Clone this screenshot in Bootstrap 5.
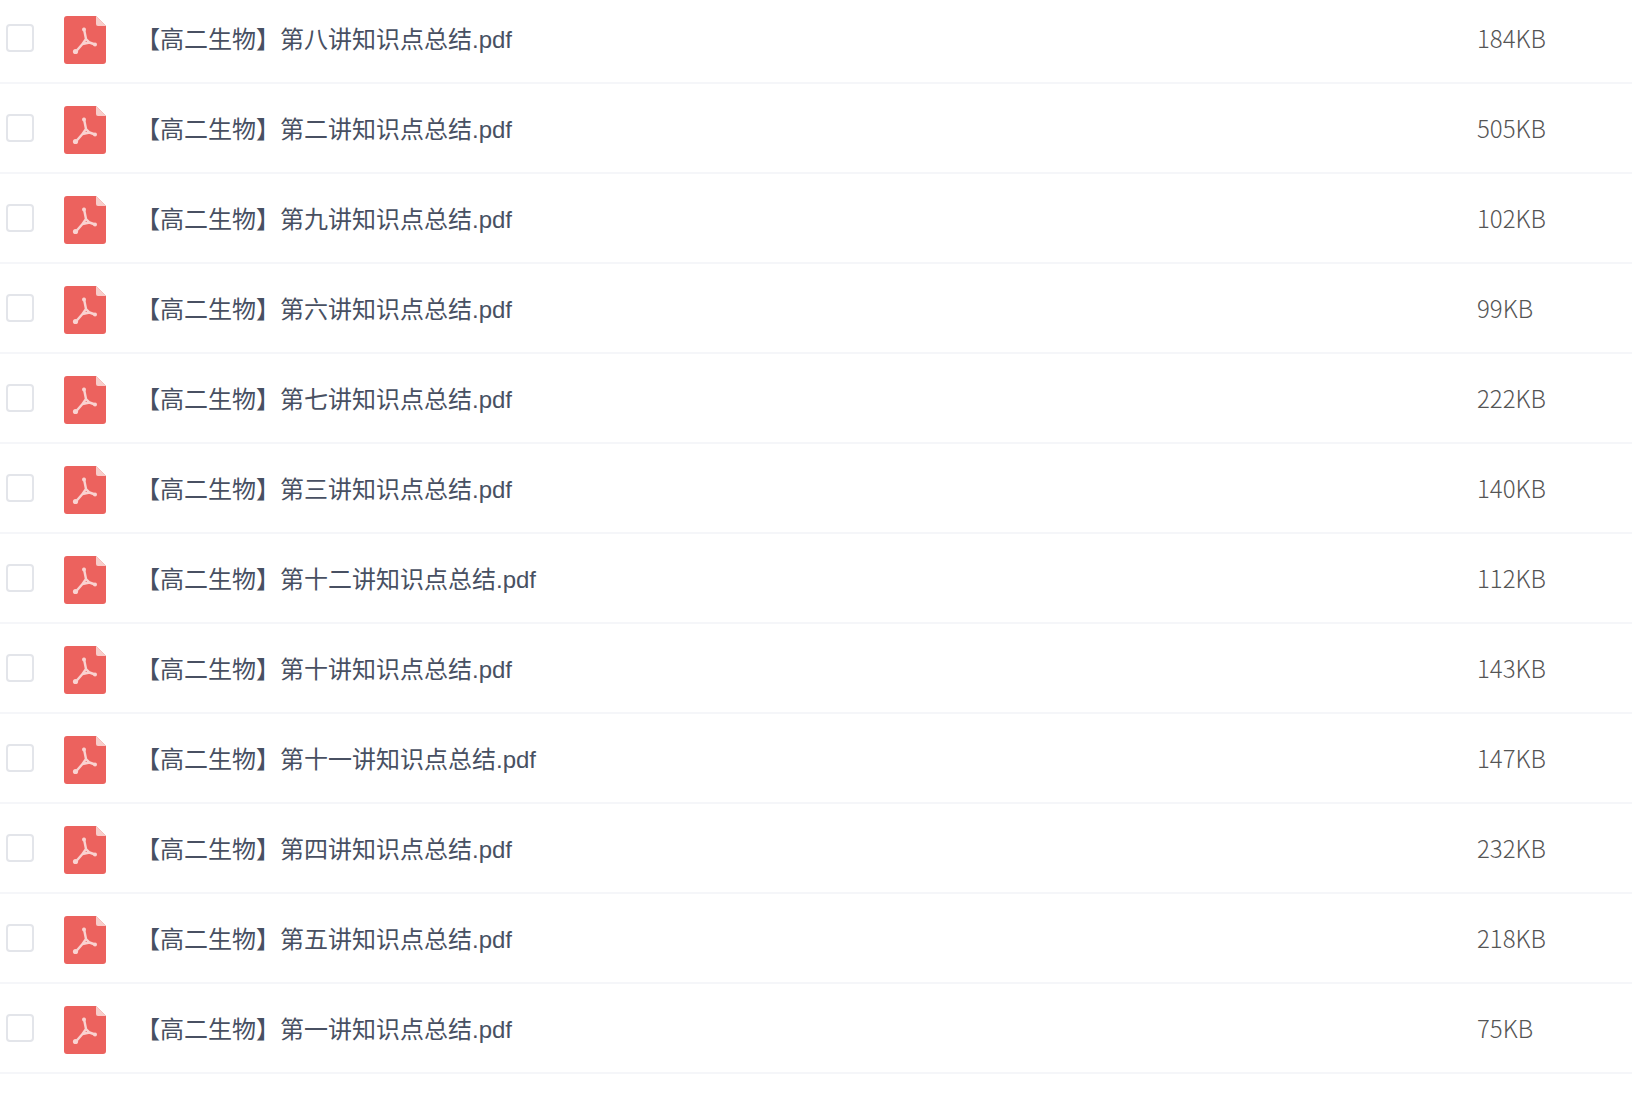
<!DOCTYPE html>
<html lang="zh-CN">
<head>
  <meta charset="UTF-8" />
  <meta name="viewport" content="width=device-width, initial-scale=1">
  <title>高二生物 文件列表</title>
  <link href="https://cdn.jsdelivr.net/npm/bootstrap@5.3.3/dist/css/bootstrap.min.css" rel="stylesheet">

  <style>
    body {
      background-color: #fff;
      overflow: hidden;
      font-family: "Noto Sans CJK SC", sans-serif;
    }

    .file-list {
      margin-top: -6px;
    }

    .file-row {
      height: 90px;
      padding: 0;
      border: 0;
      border-bottom: 2px solid #f5f6f9;
    }

    .file-check {
      width: 28px;
      height: 28px;
      margin: 0 0 0 6px;
      flex: none;
      border: 2px solid #e3e5ea;
      border-radius: 4px;
      background-color: #fff;
    }

    .file-icon {
      width: 42px;
      height: 48px;
      margin: 4px 0 0 30px;
      flex: none;
      display: block;
    }

    .file-name {
      margin: 4px 0 0 30px;
      flex: 1;
      font-family: "Liberation Sans", "Noto Sans CJK SC", sans-serif;
      font-size: 24px;
      font-weight: 400;
      color: #485062;
    }

    .file-size {
      width: 155px;
      flex: none;
      font-size: 24px;
      font-weight: 300;
      color: #555;
    }
  </style>
</head>

<body>
  <ul class="list-group rounded-0 file-list" id="files"></ul>

  <script>
    const files = [
      ['第八讲', '184KB'],
      ['第二讲', '505KB'],
      ['第九讲', '102KB'],
      ['第六讲', '99KB'],
      ['第七讲', '222KB'],
      ['第三讲', '140KB'],
      ['第十二讲', '112KB'],
      ['第十讲', '143KB'],
      ['第十一讲', '147KB'],
      ['第四讲', '232KB'],
      ['第五讲', '218KB'],
      ['第一讲', '75KB']
    ];

    const icon = `
      <svg class="file-icon" viewBox="0 0 42 48" aria-hidden="true">
        <path d="M3 0H32L42 10V45a3 3 0 0 1-3 3H3a3 3 0 0 1-3-3V3a3 3 0 0 1 3-3Z" fill="#ec625e"/>
        <path d="M32 0L42 10H34a2 2 0 0 1-2-2Z" fill="#f8cdca"/>
        <g fill="none" stroke="#f9d3d1" stroke-width="2.400" stroke-linecap="round" stroke-linejoin="round">
          <path d="M20 13L22 23M22 23L18.500 28L25.500 26.500ZM25.500 26.500L31 28.500M18.500 28L11.500 36"/>
        </g>
        <g fill="#f9d3d1">
          <circle cx="20" cy="13.500" r="2"/>
          <circle cx="31" cy="28.500" r="2"/>
          <circle cx="11.500" cy="35.500" r="2.600"/>
        </g>
      </svg>`;

    document.getElementById('files').innerHTML = files.map(([name, size]) => `
      <li class="list-group-item d-flex align-items-center file-row">
        <input class="form-check-input file-check" type="checkbox">
        ${icon}
        <span class="file-name">【高二生物】${name}知识点总结.pdf</span>
        <span class="file-size">${size}</span>
      </li>`).join('');
  </script>
  <script src="https://cdn.jsdelivr.net/npm/bootstrap@5.3.3/dist/js/bootstrap.bundle.min.js"></script>
</body>
</html>
